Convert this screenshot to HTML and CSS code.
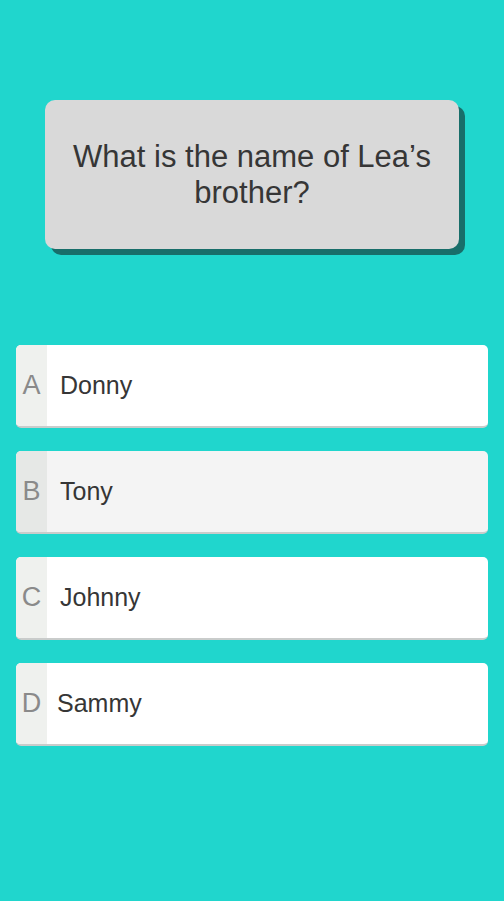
FILE: index.html
```html
<!DOCTYPE html>
<html lang="en">
<head>
    <meta charset="UTF-8">
    <meta name="viewport" content="width=device-width, initial-scale=1.0">
    <title>Quiz</title>
    <link rel="stylesheet" href="styles.css">
</head>
<body>
    <div class="quiz">
        <div class="question">
            <p>What is the name of Lea’s brother?</p>
        </div>

        <ul class="answers">
            <li class="answer">
                <span class="letter">A</span>
                <span class="label">Donny</span>
            </li>
            <li class="answer active">
                <span class="letter">B</span>
                <span class="label">Tony</span>
            </li>
            <li class="answer">
                <span class="letter">C</span>
                <span class="label">Johnny</span>
            </li>
            <li class="answer">
                <span class="letter">D</span>
                <span class="label label-tight">Sammy</span>
            </li>
        </ul>
    </div>
</body>
</html>
```

FILE: styles.css
```css
body {
    background-color: #20d6cd;
    font-family: "Liberation Sans", Arial, sans-serif;
    margin: 0;
    height: 901px;
}

.quiz {
    display: flex;
    flex-direction: column;
    padding: 100px 16px 0 16px;
}

.question {
    margin: 0 29px 0 29px;
    height: 149px;
    background-color: #d9d9d9;
    border-radius: 10px;
    box-shadow: 6px 6px 0 #186e6a;
    display: flex;
    align-items: center;
    justify-content: center;
    box-sizing: border-box;
    padding: 0 12px;
}

.question p {
    margin: 0;
    text-align: center;
    font-size: 31px;
    line-height: 36px;
    color: #363636;
}

.answers {
    list-style: none;
    margin: 96px 0 0 0;
    padding: 0;
    display: flex;
    flex-direction: column;
    gap: 23px;
}

.answer {
    display: flex;
    align-items: center;
    height: 83px;
    background-color: #fff;
    border-radius: 5px;
    border-bottom: 2px solid #c9cccb;
    box-sizing: border-box;
    overflow: hidden;
}

.answer.active {
    background-color: #f4f4f4;
}

.letter {
    width: 31px;
    align-self: stretch;
    display: flex;
    align-items: center;
    justify-content: center;
    background-color: #eff1ee;
    color: #8a8a8a;
    font-size: 27px;
}

.answer.active .letter {
    background-color: #e6e8e6;
}

.label {
    margin-left: 13px;
    font-size: 25px;
    color: #363636;
}

.label-tight {
    margin-left: 10px;
}
```
